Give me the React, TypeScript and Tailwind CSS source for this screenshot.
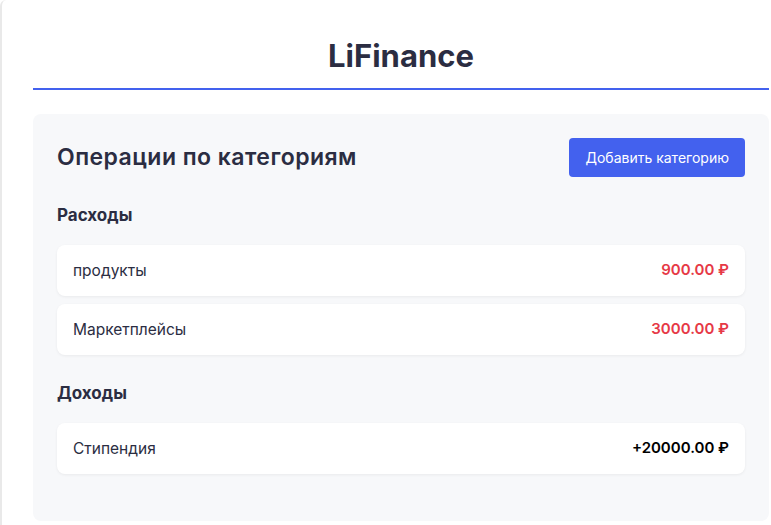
const expenses = [
  { name: "продукты", amount: "900.00 ₽" },
  { name: "Маркетплейсы", amount: "3000.00 ₽" },
];

const incomes = [{ name: "Стипендия", amount: "+20000.00 ₽" }];

const Row = ({ name, amount, income }: { name: string; amount: string; income?: boolean }) => (
  <div className="flex h-[51px] items-center justify-between rounded-lg bg-white px-4 shadow-[0_1px_3px_rgba(0,0,0,0.06)]">
    <span className="text-[15.5px] text-[#2b2d42]">{name}</span>
    <span
      className={`text-[15px] font-semibold ${income ? "text-black" : "text-[#e63946]"}`}
    >
      {amount}
    </span>
  </div>
);

export default function App() {
  return (
    <div className="min-h-[525px] bg-white font-['Inter','Noto_Sans',sans-serif]">
      <div className="min-h-[525px] rounded-tl-md border-l-2 border-[#e9e9e9] pl-[31px] pr-[2px]">
        {/* Header */}
        <header className="border-b-2 border-[#4361ee] pt-[36px] pb-[12px]">
          <h1 className="text-center text-[31px] leading-[40px] font-bold text-[#2b2d42]">
            LiFinance
          </h1>
        </header>

        {/* Categories panel */}
        <section className="mt-6 rounded-lg bg-[#f7f8fa] px-6 pt-6 pb-[47px]">
          <div className="flex items-center justify-between">
            <h2 className="text-[23px] tracking-[0.02em] font-semibold text-[#2b2d42]">
              Операции по категориям
            </h2>
            <button className="h-[39px] rounded bg-[#4361ee] px-4 text-[14px] text-white">
              Добавить категорию
            </button>
          </div>

          <h3 className="mt-[26px] mb-[18px] text-[17px] leading-6 font-bold text-[#2b2d42]">
            Расходы
          </h3>
          <div className="flex flex-col gap-2">
            {expenses.map((e) => (
              <Row key={e.name} name={e.name} amount={e.amount} />
            ))}
          </div>

          <h3 className="mt-[26px] mb-[18px] text-[17px] leading-6 font-bold text-[#2b2d42]">
            Доходы
          </h3>
          <div className="flex flex-col gap-2">
            {incomes.map((e) => (
              <Row key={e.name} name={e.name} amount={e.amount} income />
            ))}
          </div>
        </section>
      </div>
    </div>
  );
}
